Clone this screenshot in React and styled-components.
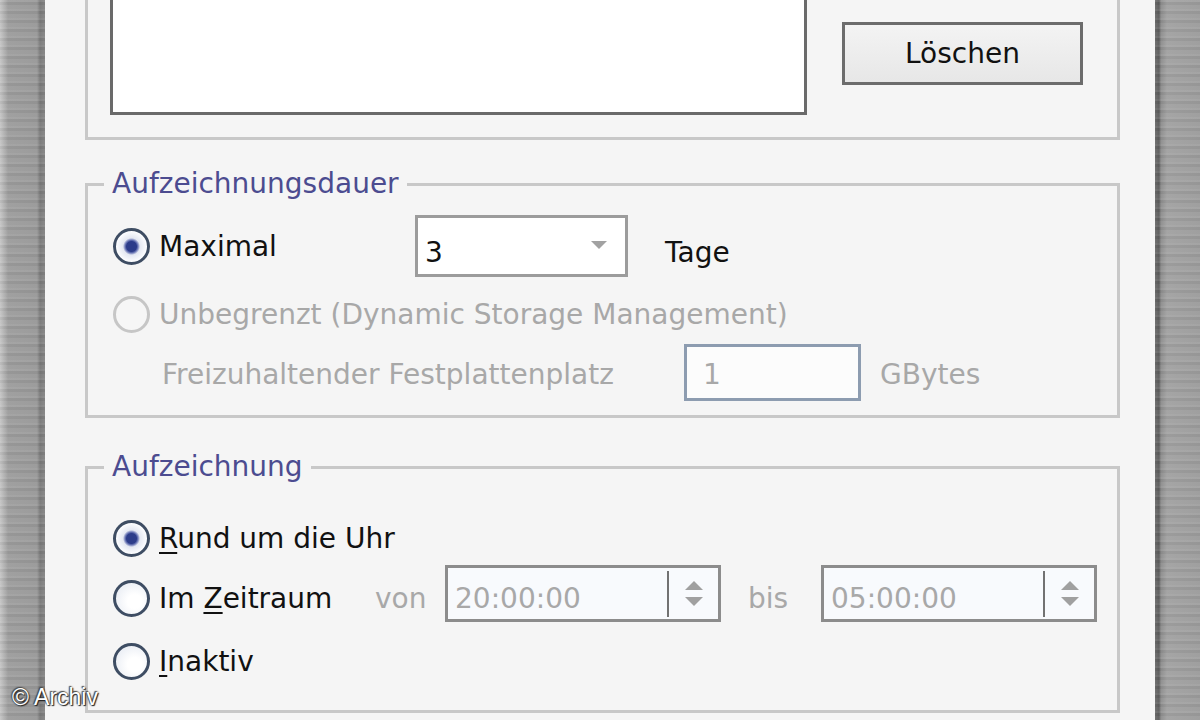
import React from "react";
import styled, { createGlobalStyle } from "styled-components";

const Global = createGlobalStyle`
  html, body { margin: 0; padding: 0; width: 1200px; height: 720px; overflow: hidden; background: #f5f5f5; }
  body { font-family: "DejaVu Sans", "Noto Sans", sans-serif; font-size: 28px; color: #111; }
`;

const Frame = styled.div`
  position: relative;
  display: flex;
  width: 1200px;
  height: 720px;
  overflow: hidden;
`;

const stripes = `repeating-linear-gradient(to bottom, rgba(255,255,255,0.08) 0 2px, rgba(0,0,0,0.04) 2px 5px, rgba(255,255,255,0.03) 5px 9px)`;

const LeftEdge = styled.div`
  width: 45px;
  flex-shrink: 0;
  background: ${stripes},
    linear-gradient(to right, #c6c6c6 0, #b2b2b2 4px, #9d9d9d 8px, #999 37px, #7a7a7a 40px, #858585 45px);
`;

const RightEdge = styled.div`
  width: 45px;
  flex-shrink: 0;
  background: ${stripes},
    linear-gradient(to right, #6c6c6c 0, #5c5c5c 4px, #8e8e8e 6px, #a2a2a2 12px, #9c9c9c 45px);
`;

const Dialog = styled.div`
  flex: 1;
  display: flex;
  flex-direction: column;
  padding: 0 35px 0 40px;
  background: #f5f5f5;
`;

const TopGroup = styled.div`
  display: flex;
  align-items: flex-start;
  height: 140px;
  box-sizing: border-box;
  border: 3px solid #c8c8c8;
  border-top: none;
  padding-left: 22px;
  flex-shrink: 0;
`;

const ListBox = styled.div`
  width: 697px;
  height: 115px;
  box-sizing: border-box;
  border: 3px solid #6a6a6a;
  border-top: none;
  background: #fff;
`;

const Button = styled.button`
  margin: 22px 0 0 35px;
  width: 241px;
  height: 63px;
  box-sizing: border-box;
  border: 3px solid #6c6c6c;
  background: linear-gradient(#f3f3f3, #e7e7e7);
  font: inherit;
  color: #111;
  padding: 0;
`;

const Group = styled.fieldset`
  margin: ${(p) => p.$mt}px 0 0;
  padding: ${(p) => p.$pt}px 0 ${(p) => p.$pb}px 25px;
  border: 3px solid #c8c8c8;
  min-width: 0;
  flex-shrink: 0;
`;

const Legend = styled.legend`
  margin-left: -9px;
  padding: 0 8px;
  color: #4c4c90;
  line-height: 34px;
`;

const Row = styled.div`
  display: flex;
  align-items: center;
  height: ${(p) => p.$h}px;
  margin-top: ${(p) => p.$mt || 0}px;
  padding-left: ${(p) => p.$indent || 0}px;
`;

const Option = styled.label`
  display: flex;
  align-items: center;
  gap: 9px;
  width: ${(p) => p.$w}px;
  flex-shrink: 0;
  white-space: nowrap;
  color: ${(p) => (p.$disabled ? "#a8a8a8" : "#111")};
  margin-top: ${(p) => p.$mt || 0}px;
`;

const Radio = styled.span`
  width: 37px;
  height: 37px;
  box-sizing: border-box;
  border-radius: 50%;
  flex-shrink: 0;
  border: 3px solid ${(p) => (p.$disabled ? "#c6c6c6" : "#3e4d63")};
  background: ${(p) =>
    p.$checked
      ? "radial-gradient(circle, #2c3c8a 0 5px, #6f7bb8 6.5px, #e4e8f2 8.5px, #fbfcfe 15px)"
      : p.$disabled
      ? "#f6f6f6"
      : "radial-gradient(circle at 60% 60%, #ffffff 0 7px, #e2e7f0 100%)"};
`;

const Key = styled.span`
  text-decoration: underline;
  text-decoration-thickness: 2px;
  text-underline-offset: 4px;
`;

const Label = styled.span`
  display: block;
  width: ${(p) => (p.$w ? `${p.$w}px` : "auto")};
  flex-shrink: 0;
  white-space: nowrap;
  color: ${(p) => (p.$disabled ? "#a8a8a8" : "#111")};
  margin-left: ${(p) => p.$ml || 0}px;
  margin-top: ${(p) => p.$mt || 0}px;
`;

const Select = styled.div`
  display: flex;
  align-items: center;
  justify-content: space-between;
  width: 213px;
  height: 62px;
  box-sizing: border-box;
  border: 3px solid #9c9c9c;
  background: #fff;
  padding: 0 18px 0 7px;
  margin-right: 37px;
  flex-shrink: 0;
`;

const Value = styled.span`
  margin-top: 12px;
  color: #111;
`;

const DownArrow = styled.span`
  width: 0;
  height: 0;
  border-left: 8px solid transparent;
  border-right: 8px solid transparent;
  border-top: 8px solid #a2a2a2;
  margin-bottom: 2px;
`;

const Field = styled.div`
  display: flex;
  align-items: center;
  width: 177px;
  height: 57px;
  box-sizing: border-box;
  border: 3px solid #8d9cb0;
  background: #fcfcfc;
  padding: 4px 0 0 16px;
  margin-right: 19px;
  flex-shrink: 0;
  color: #a8a8a8;
`;

const Spinner = styled.div`
  display: flex;
  align-items: center;
  width: 276px;
  height: 57px;
  box-sizing: border-box;
  border: 3px solid #8c8c8c;
  background: #f8fafd;
  flex-shrink: 0;
`;

const SpinText = styled.span`
  width: 212px;
  padding-left: 7px;
  margin-top: 10px;
  color: #a8a8a8;
`;

const SpinDivider = styled.span`
  width: 2px;
  height: 46px;
  background: #727272;
`;

const SpinArrows = styled.span`
  flex: 1;
  display: flex;
  flex-direction: column;
  align-items: center;
  gap: 7px;
`;

const Tri = styled.span`
  width: 0;
  height: 0;
  border-left: 9px solid transparent;
  border-right: 9px solid transparent;
  ${(p) => (p.$up ? "border-bottom: 9px solid #a0a0a0;" : "border-top: 9px solid #a0a0a0;")}
`;

const Credit = styled.div`
  position: absolute;
  left: 12px;
  bottom: 9px;
  font-family: "Liberation Sans", Arial, sans-serif;
  font-size: 23px;
  color: #fff;
  text-shadow: 0 0 2px #222, 1px 1px 1px #222, -1px -1px 1px #555;
`;

function TimeSpinner({ value }) {
  return (
    <Spinner>
      <SpinText>{value}</SpinText>
      <SpinDivider />
      <SpinArrows>
        <Tri $up />
        <Tri />
      </SpinArrows>
    </Spinner>
  );
}

export default function App() {
  return (
    <Frame>
      <Global />
      <LeftEdge />
      <Dialog>
        <TopGroup>
          <ListBox />
          <Button>Löschen</Button>
        </TopGroup>

        <Group $mt={27} $pt={14} $pb={14}>
          <Legend>Aufzeichnungsdauer</Legend>
          <Row $h={62}>
            <Option $w={302}>
              <Radio $checked />
              Maximal
            </Option>
            <Select>
              <Value>3</Value>
              <DownArrow />
            </Select>
            <Label $mt={12}>Tage</Label>
          </Row>
          <Row $h={50} $mt={12}>
            <Option $w={700} $disabled>
              <Radio $disabled />
              Unbegrenzt (Dynamic Storage Management)
            </Option>
          </Row>
          <Row $h={57} $mt={5} $indent={49}>
            <Label $w={522} $mt={4} $disabled>Freizuhaltender Festplattenplatz</Label>
            <Field>1</Field>
            <Label $mt={4} $disabled>GBytes</Label>
          </Row>
        </Group>

        <Group $mt={32} $pt={29} $pb={24}>
          <Legend>Aufzeichnung</Legend>
          <Row $h={50}>
            <Option $w={400}>
              <Radio $checked />
              <span>
                <Key>R</Key>und um die Uhr
              </span>
            </Option>
          </Row>
          <Row $h={57} $mt={2}>
            <Option $w={262} $mt={9}>
              <Radio />
              <span>
                Im <Key>Z</Key>eitraum
              </span>
            </Option>
            <Label $w={70} $mt={10} $disabled>von</Label>
            <TimeSpinner value="20:00:00" />
            <Label $w={73} $ml={27} $mt={10} $disabled>bis</Label>
            <TimeSpinner value="05:00:00" />
          </Row>
          <Row $h={50} $mt={14}>
            <Option $w={300}>
              <Radio />
              <span>
                <Key>I</Key>naktiv
              </span>
            </Option>
          </Row>
        </Group>
      </Dialog>
      <RightEdge />
      <Credit>© Archiv</Credit>
    </Frame>
  );
}
